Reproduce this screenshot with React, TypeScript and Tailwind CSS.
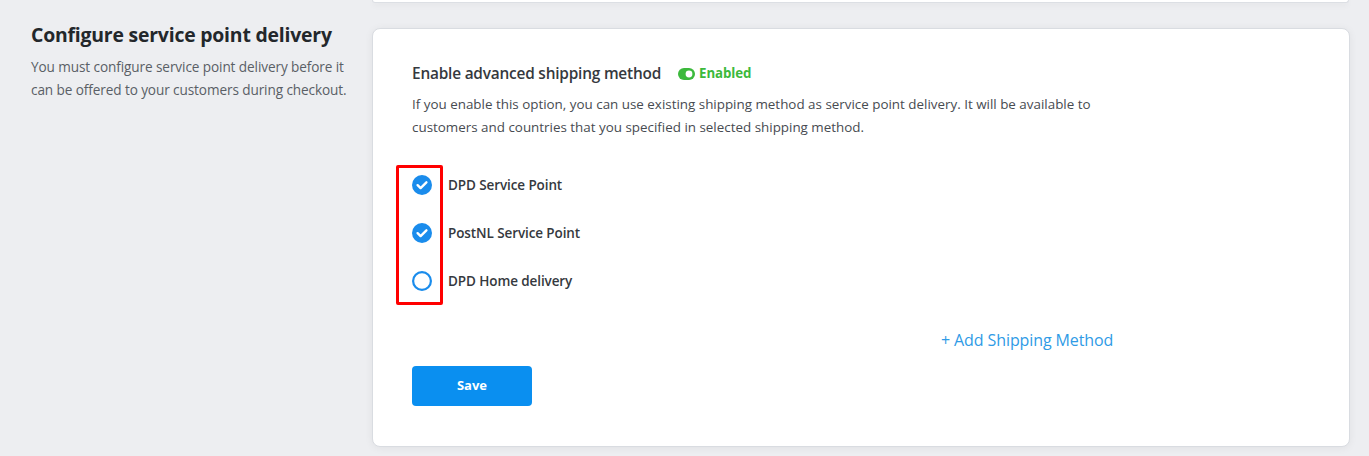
import React from "react"

const methods = [
  { name: "DPD Service Point", checked: true },
  { name: "PostNL Service Point", checked: true },
  { name: "DPD Home delivery", checked: false },
]

function CheckCircle({ checked }: { checked: boolean }) {
  if (checked) {
    return (
      <svg width="20" height="20" viewBox="0 0 20 20">
        <circle cx="10" cy="10" r="10" fill="#1a8cec" />
        <path d="M5.6 10.2 L8.6 13.1 L14.4 7.3" fill="none" stroke="#fff" strokeWidth="2.4" strokeLinecap="round" strokeLinejoin="round" />
      </svg>
    )
  }
  return (
    <svg width="20" height="20" viewBox="0 0 20 20">
      <circle cx="10" cy="10" r="8.9" fill="#fff" stroke="#1a8cec" strokeWidth="2.2" />
    </svg>
  )
}

function ToggleIcon() {
  return (
    <svg width="17" height="12" viewBox="0 0 17 12">
      <rect x="0" y="0" width="17" height="12" rx="6" fill="#3cb93c" />
      <circle cx="11" cy="6" r="3.4" fill="#fff" />
    </svg>
  )
}

export default function App() {
  return (
    <div
      className="w-[1369px] h-[456px] overflow-hidden bg-[#edeef1] flex flex-col"
      style={{ fontFamily: '"Open Sans", "Noto Sans", sans-serif' }}
    >
      {/* card above, only its bottom edge is visible */}
      <div className="flex">
        <div className="w-[372px] shrink-0" />
        <div className="w-[977px] h-[3px] bg-white rounded-b-[6px] border-b border-x border-[#dcdfe4] shadow-[0_2px_6px_rgba(0,0,0,0.06)]" />
      </div>

      <div className="flex mt-[25px]">
        {/* left description */}
        <div className="w-[372px] shrink-0 pl-[31px] pr-[20px] -mt-[5px]">
          <h2 className="text-[19.4px] leading-[24px] font-bold text-[#23272b] tracking-[-0.2px]">
            Configure service point delivery
          </h2>
          <p className="mt-[8px] text-[13.6px] leading-[23px] text-[#5a5f66] tracking-[-0.1px] w-[320px]">
            You must configure service point delivery before it can be offered to your customers during checkout.
          </p>
        </div>

        {/* main card */}
        <div className="w-[978px] h-[419px] bg-white rounded-[8px] border border-[#d9dce1] shadow-[0_1px_8px_rgba(0,0,0,0.06)] pl-[39px] pt-[34px] flex flex-col">
          <div className="flex items-center">
            <span className="text-[15.4px] leading-[22px] font-semibold text-[#35393e] tracking-[-0.2px]">
              Enable advanced shipping method
            </span>
            <span className="ml-[17px] flex items-center gap-[4px]">
              <ToggleIcon />
              <span className="text-[13.3px] font-bold text-[#3cb93c] tracking-[-0.1px]">Enabled</span>
            </span>
          </div>
          <p className="mt-[8px] w-[700px] text-[13.4px] leading-[23px] text-[#474b51] tracking-[0px]">
            If you enable this option, you can use existing shipping method as service point delivery. It will be available to customers and countries that you specified in selected shipping method.
          </p>

          <div className="mt-[26px] -ml-[16px] flex flex-col gap-[28px] w-[47px] h-[140px] border-[3px] border-[#ff0000] rounded-[2px] pt-[7px] pl-[13px] relative">
            {methods.map((m) => (
              <div key={m.name} className="flex items-center h-[20px] relative">
                <CheckCircle checked={m.checked} />
                <span className="absolute left-[36px] whitespace-nowrap text-[13.5px] font-semibold text-[#35393e] tracking-[-0.1px]">
                  {m.name}
                </span>
              </div>
            ))}
          </div>

          <div className="mt-[23px] pl-[529px]">
            <button className="text-[16px] leading-[22px] text-[#2f9be6] tracking-[-0.1px]">+ Add Shipping Method</button>
          </div>

          <button className="mt-[14px] w-[120px] h-[40px] rounded-[4px] bg-[#0a8ff0] text-white text-[13px] font-bold">
            Save
          </button>
        </div>
      </div>
    </div>
  )
}
